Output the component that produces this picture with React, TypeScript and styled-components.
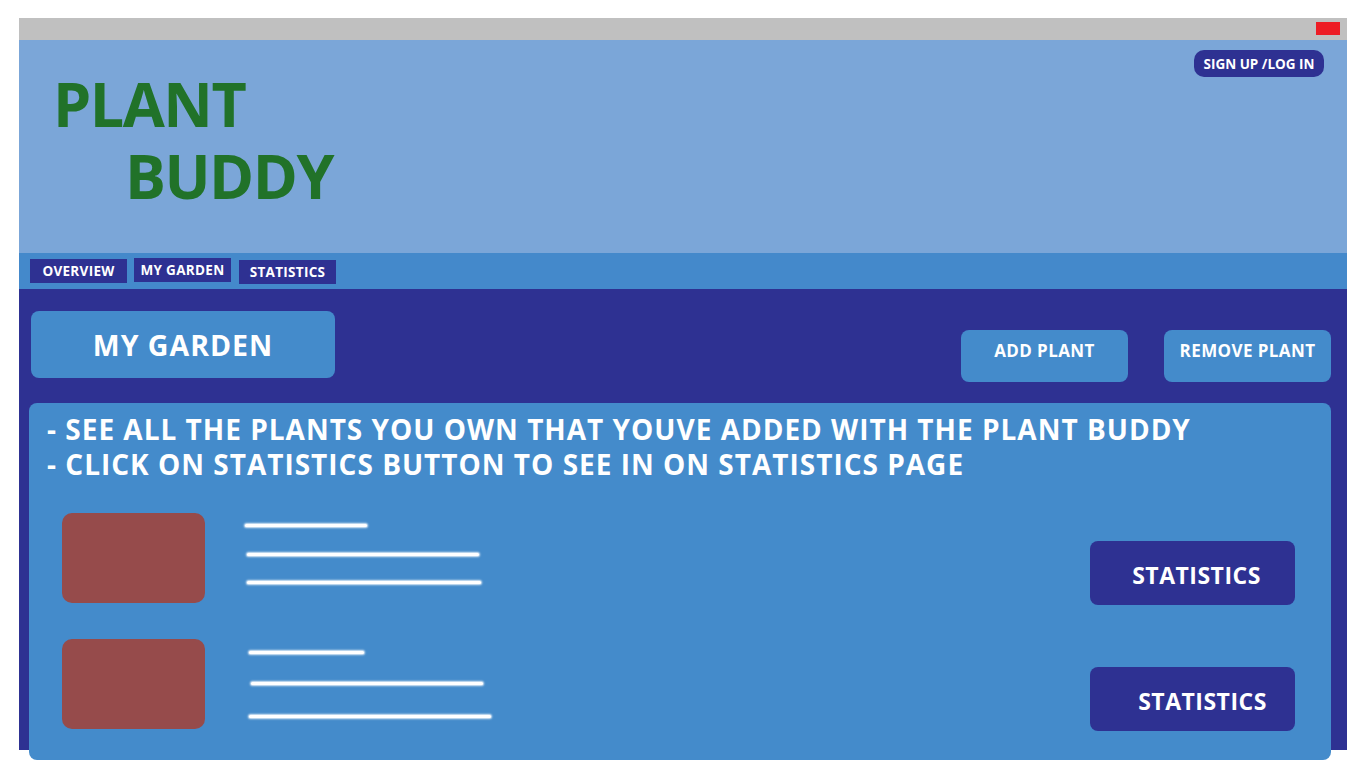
import React from "react";
import styled, { createGlobalStyle } from "styled-components";

const Global = createGlobalStyle`
  html, body { margin: 0; padding: 0; background: #ffffff; }
  body { font-family: "Open Sans", "Noto Sans", sans-serif; }
  #root { padding: 18px 0 8px 19px; }
  * { box-sizing: border-box; }
`;

const Frame = styled.div`
  width: 1328px;
  display: flex;
  flex-direction: column;
`;

const TopBar = styled.div`
  height: 22px;
  flex-shrink: 0;
  background: #c0c0c0;
  display: flex;
  justify-content: flex-end;
  align-items: flex-start;
  padding: 4px 7px 0 0;
`;

const CloseMark = styled.div`
  width: 24px;
  height: 13px;
  background: #ed1c24;
`;

const Header = styled.header`
  height: 213px;
  flex-shrink: 0;
  background: #7ba6d8;
  display: flex;
  justify-content: space-between;
  align-items: flex-start;
  padding: 10px 23px 0 34px;
`;

const Logo = styled.h1`
  margin: 18px 0 0 0;
  display: flex;
  flex-direction: column;
  font-family: "Open Sans", sans-serif;
  font-weight: 700;
  font-size: 61px;
  letter-spacing: -1.5px;
  line-height: 72px;
  color: #217229;
`;

const LogoLine = styled.span<{ $indent: number }>`
  padding-left: ${(p) => p.$indent}px;
`;

const SignButton = styled.button`
  width: 130px;
  height: 27px;
  border: none;
  border-radius: 10px;
  background: #2e3192;
  color: #ffffff;
  font-family: "Open Sans", sans-serif;
  font-weight: 700;
  font-size: 13.5px;
  padding: 0;
  display: flex;
  align-items: center;
  justify-content: center;
`;

const Nav = styled.nav`
  height: 36px;
  flex-shrink: 0;
  background: #4489cb;
  display: flex;
  align-items: flex-start;
  gap: 7px;
  padding: 6px 0 0 11px;
`;

const NavItem = styled.button<{ $dy: number; $dx: number }>`
  width: 97px;
  height: 24px;
  margin-top: ${(p) => p.$dy}px;
  margin-left: ${(p) => p.$dx}px;
  border: none;
  border-radius: 0;
  background: #2e3192;
  color: #ffffff;
  font-family: "Open Sans", sans-serif;
  font-weight: 700;
  font-size: 13.5px;
  letter-spacing: 0.3px;
  padding: 0;
  display: flex;
  align-items: center;
  justify-content: center;
`;

/* dark panel ends 10px above the card's bottom edge, as in the mock-up */
const Main = styled.main`
  background: linear-gradient(#2e3192, #2e3192) top left / 100% calc(100% - 10px) no-repeat;
  display: flex;
  flex-direction: column;
  padding: 22px 16px 0 10px;
`;

const TopRow = styled.div`
  display: flex;
  justify-content: space-between;
  align-items: flex-start;
`;

const TitleBox = styled.h2`
  margin: 0 0 0 2px;
  width: 304px;
  height: 67px;
  border-radius: 8px;
  background: #448bcb;
  color: #ffffff;
  font-family: "Open Sans", sans-serif;
  font-weight: 700;
  font-size: 28.5px;
  letter-spacing: 1px;
  display: flex;
  align-items: center;
  justify-content: center;
`;

const Actions = styled.div`
  display: flex;
  gap: 36px;
  margin-top: 19px;
`;

const ActionButton = styled.button`
  width: 167px;
  height: 52px;
  border: none;
  border-radius: 8px;
  background: #448bcb;
  color: #ffffff;
  font-family: "Open Sans", sans-serif;
  font-weight: 700;
  font-size: 17px;
  letter-spacing: 0.4px;
  padding: 9px 0 0 0;
  display: flex;
  align-items: flex-start;
  justify-content: center;
`;

const Card = styled.section`
  margin-top: 21px;
  height: 357px;
  border-radius: 8px;
  background: #448bcb;
  padding: 9px 36px 0 18px;
  display: flex;
  flex-direction: column;
`;

const Intro = styled.div`
  color: #ffffff;
  font-family: "Open Sans", sans-serif;
  font-weight: 700;
  font-size: 28px;
  letter-spacing: 1px;
  line-height: 35px;
  white-space: nowrap;
`;

const Rows = styled.div`
  display: flex;
  flex-direction: column;
  gap: 34px;
  margin-top: 31px;
  padding-left: 15px;
`;

const Row = styled.div`
  display: flex;
  align-items: flex-start;
`;

const Thumb = styled.div`
  width: 143px;
  height: 90px;
  border-radius: 10px;
  background: #964b4b;
  flex-shrink: 0;
`;

const Lines = styled.div`
  flex: 1;
  display: flex;
  flex-direction: column;
  align-items: flex-start;
`;

const Line = styled.div<{ $top: number; $left: number }>`
  margin-top: ${(p) => p.$top}px;
  margin-left: ${(p) => p.$left}px;
  height: 3px;
  border-radius: 3px;
  background: #ffffff;
  box-shadow: 0 0 2px 1px rgba(255, 255, 255, 0.85);
`;

const StatsButton = styled.button<{ $shift: number }>`
  width: 205px;
  height: 64px;
  margin-top: 28px;
  border: none;
  border-radius: 8px;
  background: #2e3192;
  color: #ffffff;
  font-family: "Open Sans", sans-serif;
  font-weight: 700;
  font-size: 23px;
  letter-spacing: 0.5px;
  padding: 4px 0 0 ${(p) => p.$shift}px;
  display: flex;
  align-items: center;
  justify-content: center;
  flex-shrink: 0;
`;

type LineSpec = { top: number; left: number; width: number };

const plants: { lines: LineSpec[]; shift: number }[] = [
  {
    shift: 8,
    lines: [
      { top: 11, left: 40, width: 122 },
      { top: 26, left: 42, width: 232 },
      { top: 25, left: 42, width: 234 },
    ],
  },
  {
    shift: 20,
    lines: [
      { top: 12, left: 44, width: 115 },
      { top: 28, left: 46, width: 232 },
      { top: 30, left: 44, width: 242 },
    ],
  },
];

export default function App() {
  return (
    <>
      <Global />
      <Frame>
        <TopBar>
          <CloseMark />
        </TopBar>
        <Header>
          <Logo>
            <LogoLine $indent={0}>PLANT</LogoLine>
            <LogoLine $indent={72}>BUDDY</LogoLine>
          </Logo>
          <SignButton>SIGN UP /LOG IN</SignButton>
        </Header>
        <Nav>
          <NavItem $dy={0} $dx={0}>OVERVIEW</NavItem>
          <NavItem $dy={-1} $dx={0}>MY GARDEN</NavItem>
          <NavItem $dy={1} $dx={1}>STATISTICS</NavItem>
        </Nav>
        <Main>
          <TopRow>
            <TitleBox>MY GARDEN</TitleBox>
            <Actions>
              <ActionButton>ADD PLANT</ActionButton>
              <ActionButton>REMOVE PLANT</ActionButton>
            </Actions>
          </TopRow>
          <Card>
            <Intro>
              - SEE ALL THE PLANTS YOU OWN THAT YOUVE ADDED WITH THE PLANT BUDDY
              <br />- CLICK ON STATISTICS BUTTON TO SEE IN ON STATISTICS PAGE
            </Intro>
            <Rows>
              {plants.map((p, i) => (
                <Row key={i}>
                  <Thumb />
                  <Lines>
                    {p.lines.map((l, j) => (
                      <Line key={j} $top={l.top} $left={l.left} style={{ width: l.width }} />
                    ))}
                  </Lines>
                  <StatsButton $shift={p.shift}>STATISTICS</StatsButton>
                </Row>
              ))}
            </Rows>
          </Card>
        </Main>
      </Frame>
    </>
  );
}
